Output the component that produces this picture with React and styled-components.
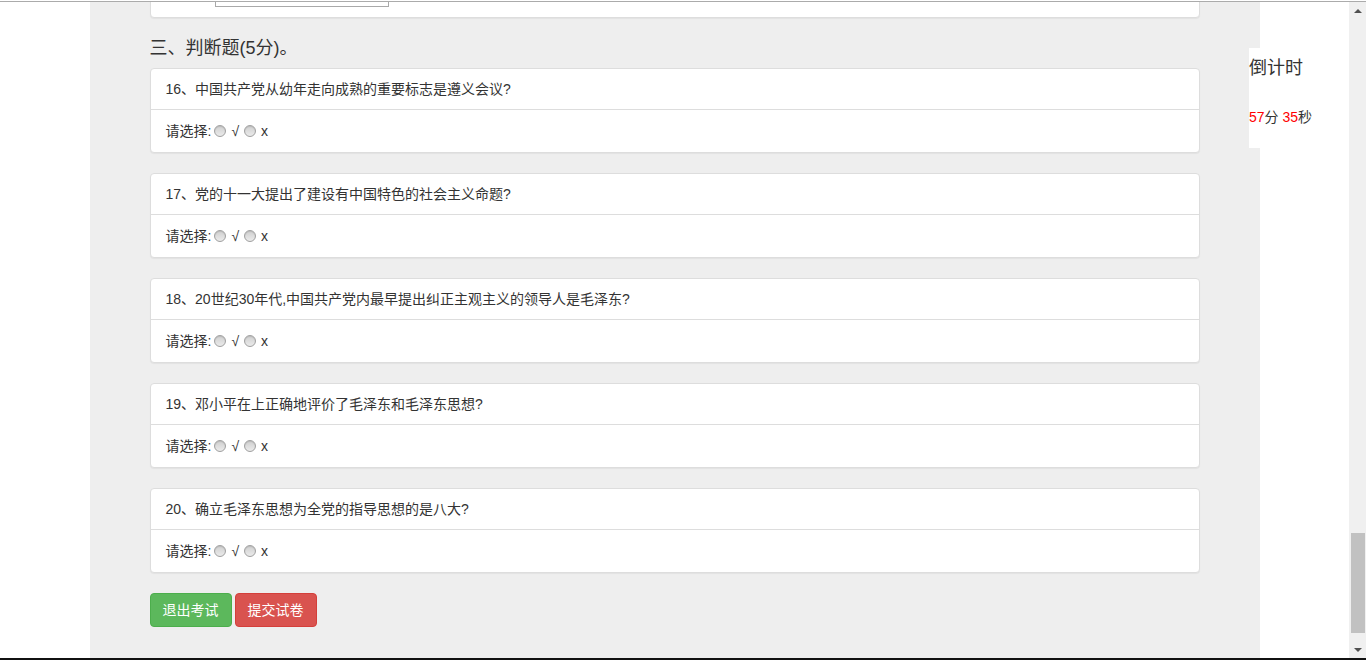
import styled, { createGlobalStyle } from "styled-components";

const GlobalStyle = createGlobalStyle`
  html, body {
    margin: 0;
    padding: 0;
    background: #fff;
  }
  body {
    font-family: "Liberation Sans", "Noto Sans CJK SC", sans-serif;
    font-size: 14px;
    line-height: 20px;
    color: #333;
  }
  * {
    box-sizing: border-box;
  }
`;

const judgeQuestions = [
  { no: 16, text: "中国共产党从幼年走向成熟的重要标志是遵义会议?" },
  { no: 17, text: "党的十一大提出了建设有中国特色的社会主义命题?" },
  { no: 18, text: "20世纪30年代,中国共产党内最早提出纠正主观主义的领导人是毛泽东?" },
  { no: 19, text: "邓小平在上正确地评价了毛泽东和毛泽东思想?" },
  { no: 20, text: "确立毛泽东思想为全党的指导思想的是八大?" },
];

const App = () => {
  return (
    <>
      <GlobalStyle />
      <StyledFrame>
        <StyledTopEdge />
        <StyledWindow>
          <StyledViewport>
            <StyledContainer>
              {/* previous question, scrolled mostly out of view */}
              <StyledCard>
                <StyledCardBody $pad="0 15px 10px 64px">
                  <StyledTextInput type="text" aria-label="答案" />
                </StyledCardBody>
              </StyledCard>

              <StyledSectionTitle>三、判断题(5分)。</StyledSectionTitle>
              {judgeQuestions.map((q) => (
                <StyledCard key={q.no}>
                  <StyledCardHead>
                    {q.no}、{q.text}
                  </StyledCardHead>
                  <StyledCardBody>
                    请选择:
                    <StyledRadio type="radio" name={`q${q.no}`} value="1" />
                    √
                    <StyledRadio type="radio" name={`q${q.no}`} value="0" />
                    x
                  </StyledCardBody>
                </StyledCard>
              ))}

              <StyledActions>
                <StyledButton $variant="success">退出考试</StyledButton>
                <StyledButton $variant="danger">提交试卷</StyledButton>
              </StyledActions>
            </StyledContainer>
          </StyledViewport>

          <StyledScrollbar>
            <StyledArrow>
              <StyledTriangle $up />
            </StyledArrow>
            <StyledTrack>
              <StyledThumb />
            </StyledTrack>
            <StyledArrow>
              <StyledTriangle />
            </StyledArrow>
          </StyledScrollbar>
        </StyledWindow>
        <StyledBottomEdge />

        <StyledCountdown>
          <StyledCountdownTitle>倒计时</StyledCountdownTitle>
          <StyledCountdownTime>
            <StyledRed>57</StyledRed>分 <StyledRed>35</StyledRed>秒
          </StyledCountdownTime>
        </StyledCountdown>
      </StyledFrame>
    </>
  );
};

const StyledFrame = styled.div`
  position: relative;
  height: 660px;
  width: 1366px;
  display: flex;
  flex-direction: column;
  overflow: hidden;
`;

const StyledTopEdge = styled.div`
  height: 2px;
  border-top: 1px solid #fff;
  border-bottom: 1px solid #ababab;
`;

const StyledBottomEdge = styled.div`
  height: 2px;
  background: #111;
`;

const StyledWindow = styled.div`
  flex: 1;
  display: flex;
  min-height: 0;
`;

const StyledViewport = styled.div`
  flex: 1;
  overflow: hidden;
  display: flex;
  flex-direction: column;
  justify-content: flex-end;
  background: #fff;
`;

const StyledContainer = styled.div`
  flex-shrink: 0;
  width: 1170px;
  margin: 0 auto;
  background: #eee;
  padding: 0 60px 31px;
`;

const StyledSectionTitle = styled.h4`
  margin: 20px 0 10px;
  font-size: 18px;
  line-height: 20px;
  font-weight: normal;
  color: #333;
`;

const StyledCard = styled.div`
  background: #fff;
  border: 1px solid #ddd;
  border-radius: 4px;
  margin-bottom: 20px;
  box-shadow: 0 1px 1px rgba(0, 0, 0, 0.05);
`;

const StyledCardHead = styled.div`
  padding: 10px 15px;
  border-bottom: 1px solid #ddd;
  line-height: 20px;
`;

const StyledCardBody = styled.div`
  display: flex;
  align-items: center;
  padding: ${(p) => p.$pad || "11px 15px"};
  min-height: 42px;
  line-height: 20px;
`;

const StyledTextInput = styled.input`
  width: 174px;
  height: 26px;
  margin-top: 6px;
  border: 1px solid #a9a9a9;
  background: #fff;
`;

const StyledRadio = styled.input`
  appearance: none;
  width: 12px;
  height: 12px;
  margin: 0 5px 1px 3px;
  border-radius: 50%;
  border: 1px solid #a0a0a0;
  background: linear-gradient(#cfcfcf, #ebebeb);
  box-shadow: inset 0 1px 1px rgba(0, 0, 0, 0.1);
  & + & {
    margin-left: 5px;
  }
`;

const StyledActions = styled.div`
  display: flex;
  gap: 3px;
`;

const StyledButton = styled.button`
  font-family: inherit;
  font-size: 14px;
  line-height: 20px;
  padding: 6px 12px;
  border-radius: 4px;
  color: #fff;
  cursor: pointer;
  border: 1px solid
    ${(p) => (p.$variant === "danger" ? "#d43f3a" : "#4cae4c")};
  background: ${(p) => (p.$variant === "danger" ? "#d9534f" : "#5cb85c")};
`;

const StyledScrollbar = styled.div`
  width: 17px;
  display: flex;
  flex-direction: column;
  background: #f0f0f0;
`;

const StyledArrow = styled.div`
  height: 17px;
  display: flex;
  align-items: center;
  justify-content: center;
`;

const StyledTriangle = styled.span`
  width: 0;
  height: 0;
  border-left: 4px solid transparent;
  border-right: 4px solid transparent;
  ${(p) =>
    p.$up
      ? "border-bottom: 4px solid #505050;"
      : "border-top: 4px solid #505050;"}
`;

const StyledTrack = styled.div`
  flex: 1;
  display: flex;
  flex-direction: column;
  justify-content: flex-end;
  padding: 0 1px 8px 2px;
`;

const StyledThumb = styled.div`
  height: 100px;
  background: #c1c1c1;
`;

const StyledCountdown = styled.div`
  position: absolute;
  left: 1249px;
  top: 48px;
  width: 100px;
  height: 100px;
  background: #fff;
`;

const StyledCountdownTitle = styled.div`
  margin-top: 9px;
  font-size: 18px;
  line-height: 22px;
  color: #333;
`;

const StyledCountdownTime = styled.div`
  margin-top: 28px;
  font-size: 14px;
  line-height: 20px;
  color: #333;
`;

const StyledRed = styled.span`
  color: #ff0000;
`;

export default App;
